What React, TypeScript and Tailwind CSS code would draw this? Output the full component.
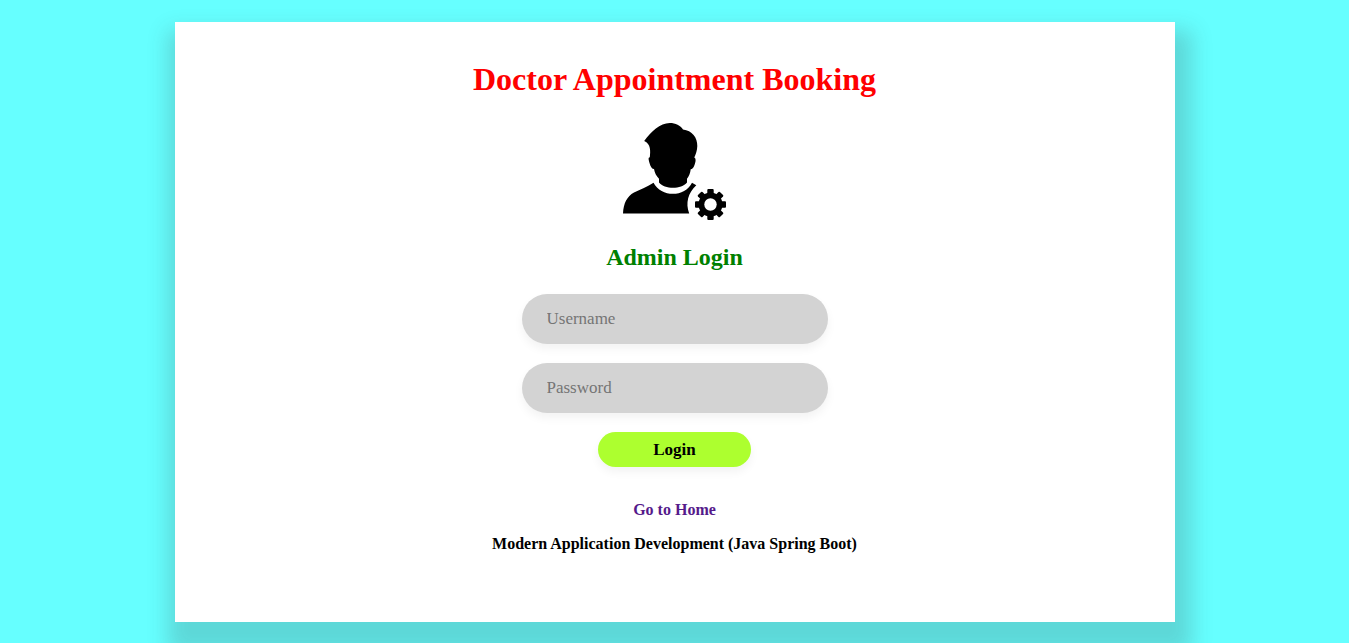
import { useState } from "react";

function AdminIcon() {
  return (
    <svg width="104" height="98" viewBox="0 0 104 98" className="block" aria-label="Administrator">
      <path d="M21.2 18C28 8.500 37 0 46.800 0C52.500 0 57.500 2.500 60 6.500C69 7.500 74.500 14.500 74.300 23C74.200 27.500 72.800 31 71.300 34.600C73.200 35.500 72.800 39 71.500 42C70.500 45 69 46 67.700 46.300C67.300 50 66 53.500 64 55.700V59.500C58.500 66.500 41.500 66.500 36 59.500V55.700C33.300 53 31.500 49.500 31 46C29 46 27.700 44 26.500 40C25.600 36.500 25 34.500 26.800 34.300C27.500 28 28 21 21.200 18Z" />
      <path d="M30.500 59.700C38 74.500 62 74.500 69 59.700L73.300 62.300C65 70 62.300 80 66.200 90.600H0C0.500 80 4 73.500 11 69.500C17.500 66 24.500 64 30.500 59.700Z" />
      <g transform="translate(87.5 81.500)">
        <rect x="-3.200" y="-15.500" width="6.400" height="31" rx="1" />
        <rect x="-3.200" y="-15.500" width="6.400" height="31" rx="1" transform="rotate(45)" />
        <rect x="-3.200" y="-15.500" width="6.400" height="31" rx="1" transform="rotate(90)" />
        <rect x="-3.200" y="-15.500" width="6.400" height="31" rx="1" transform="rotate(135)" />
        <circle r="12" />
        <circle r="6.200" fill="white" />
      </g>
    </svg>
  );
}

const fieldClass =
  "block h-[50px] w-[306px] rounded-[25px] bg-[#d3d3d3] px-[25px] text-[17px] text-black shadow-[0_5px_10px_rgba(0,0,0,0.05)] outline-none placeholder:text-[#757575]";

export default function App() {
  const [username, setUsername] = useState("");
  const [password, setPassword] = useState("");

  return (
    <div className="h-screen overflow-hidden bg-[#66ffff] pt-[22px] font-['Liberation_Serif',serif]">
      <main className="mx-auto flex h-[600px] w-[1000px] flex-col items-center bg-white pt-[39px] shadow-[5px_20px_20px_12px_rgba(60,60,60,0.2)]">
        <h1 className="text-[32px] leading-[37px] font-bold text-[#ff0000]">Doctor Appointment Booking</h1>
        <div className="mt-[25px]">
          <AdminIcon />
        </div>
        <h2 className="mt-[23px] text-[24px] leading-[27px] font-bold text-[#008000]">Admin Login</h2>
        <form className="mt-[23px] flex flex-col items-center" onSubmit={(e) => e.preventDefault()}>
          <input className={fieldClass} placeholder="Username" value={username} onChange={(e) => setUsername(e.target.value)} />
          <input className={`${fieldClass} mt-[19px]`} type="password" placeholder="Password" value={password} onChange={(e) => setPassword(e.target.value)} />
          <button className="mt-[19px] h-[35px] w-[153px] rounded-full bg-[#adff2f] text-[17px] font-bold text-black shadow-[0_5px_10px_rgba(0,0,0,0.05)]">Login</button>
        </form>
        <a href="#" className="mt-[34px] text-base leading-[18px] font-bold text-[#551a8b]">Go to Home</a>
        <p className="mt-4 text-base leading-[18px] font-bold text-black">Modern Application Development (Java Spring Boot)</p>
      </main>
    </div>
  );
}
